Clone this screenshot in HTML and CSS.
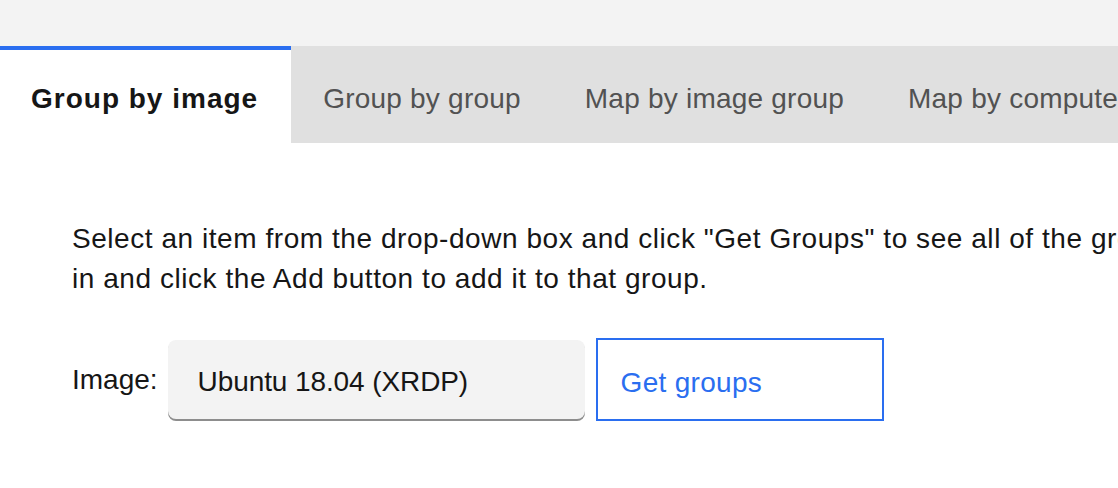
FILE: index.html
```html
<!DOCTYPE html>
<html>
<head>
<meta charset="utf-8">
<link rel="stylesheet" href="styles.css">
</head>
<body>
<div class="topbar"></div>
<nav class="tabs">
  <div class="tab active">Group by image</div>
  <div class="tab">Group by group</div>
  <div class="tab">Map by image group</div>
  <div class="tab">Map by compute group</div>
</nav>
<main class="content">
  <p class="intro">Select an item from the drop-down box and click "Get Groups" to see all of the groups it is<br>in and click the Add button to add it to that group.</p>
  <div class="form-row">
    <label class="label">Image:</label>
    <div class="select">Ubuntu 18.04 (XRDP)</div>
    <button class="btn">Get groups</button>
  </div>
</main>
</body>
</html>
```
FILE: styles.css
```css
html, body {
  margin: 0;
  padding: 0;
  background: #ffffff;
  overflow: hidden;
}
body {
  width: 1118px;
  height: 488px;
  font-family: "Liberation Sans", Arial, sans-serif;
  font-size: 28px;
  color: #161616;
}
.topbar {
  height: 46px;
  background: #f3f3f3;
}
.tabs {
  display: flex;
  height: 97px;
  background: #e0e0e0;
  white-space: nowrap;
}
.tab {
  box-sizing: border-box;
  display: flex;
  align-items: center;
  height: 97px;
  padding: 8px 32px 0 32px;
  color: #525252;
  font-size: 28px;
  letter-spacing: 0.22px;
  flex-shrink: 0;
}
.tab.active {
  background: #ffffff;
  border-top: 4px solid #2a6ef0;
  padding: 4px 33px 0 31px;
  color: #161616;
  font-weight: bold;
  letter-spacing: 1px;
}
.content {
  padding: 76px 0 0 72px;
}
.intro {
  margin: 0;
  line-height: 40px;
  font-size: 28px;
  letter-spacing: 0.55px;
  white-space: nowrap;
}
.form-row {
  display: flex;
  align-items: center;
  margin-top: 39px;
}
.label {
  font-size: 28px;
  margin-right: 10px;
  letter-spacing: 0;
}
.select {
  box-sizing: border-box;
  width: 417px;
  height: 79px;
  display: flex;
  align-items: center;
  padding: 4px 0 0 30px;
  background: #f3f3f3;
  border-radius: 8px;
  box-shadow: 0 2px 0 #8d8d8d;
  font-size: 28px;
  letter-spacing: -0.1px;
}
.btn {
  box-sizing: border-box;
  width: 288px;
  height: 83px;
  margin-left: 11px;
  padding: 6px 0 0 23px;
  text-align: left;
  background: #ffffff;
  border: 2px solid #2a6ef0;
  border-radius: 0;
  color: #2a6ef0;
  font-family: "Liberation Sans", Arial, sans-serif;
  font-size: 28px;
  letter-spacing: 0.3px;
}
```
